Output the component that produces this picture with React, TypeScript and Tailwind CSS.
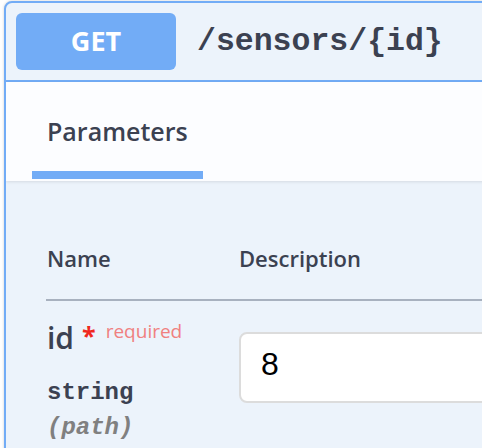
const sans = { fontFamily: '"Open Sans", "Noto Sans", sans-serif' };
const mono = { fontFamily: '"Liberation Mono", "Courier New", monospace' };

const App = () => {
  return (
    <div className="w-[482px] h-[448px] overflow-hidden bg-white" style={sans}>
      <div className="mt-px ml-1 w-[700px] h-[500px] border-2 border-[#72acf6] rounded-lg bg-[#ecf3fb] shadow-[0_0_3px_rgba(0,0,0,0.19)] overflow-hidden">
        {/* summary */}
        <div className="h-[79px] flex items-center pl-[10px] border-b-2 border-[#72acf6]">
          <div className="w-[160px] h-[57px] rounded-md bg-[#72acf6] text-white font-bold text-[27px] flex items-center justify-center">
            GET
          </div>
          <span
            className="ml-[21px] text-[31.5px] font-bold text-[#3b4151]"
            style={mono}
          >
            /sensors/{'{id}'}
          </span>
        </div>

        {/* tab header */}
        <div className="relative h-[99px] bg-[#fcfdff] shadow-[0_1px_3px_rgba(0,0,0,0.1)] flex items-end pl-[26px] pb-[2px]">
          <div className="flex flex-col">
            <span className="px-[15px] mb-[27px] text-[25px] leading-[26px] font-semibold text-[#3b4151]">
              Parameters
            </span>
            <div className="h-[8px] bg-[#72acf6]" />
          </div>
        </div>

        {/* parameters table */}
        <div className="pl-[40px]">
          <div className="flex pt-[66px] pb-[30px] border-b-2 border-[#a8b1bf] text-[22px] leading-[22px] font-semibold text-[#3b4151]">
            <span className="w-[193px] pl-px">Name</span>
            <span>Description</span>
          </div>
          <div className="flex">
            <div className="w-[193px] pl-px pt-[20px] text-[#3b4151]">
              <div className="flex items-baseline">
                <span className="text-[30px] leading-[30px] font-semibold">id</span>
                <span className="ml-[8px] text-[25px] font-bold text-[#f0281e] relative -top-[4px]">
                  *
                </span>
                <span className="ml-[10px] text-[19px] text-[#f08080] relative -top-[11px]">
                  required
                </span>
              </div>
              <div
                className="mt-[22px] text-[24px] leading-[24px] font-bold"
                style={mono}
              >
                string
              </div>
              <div
                className="mt-[11px] text-[24px] leading-[24px] font-bold italic text-[#808080]"
                style={mono}
              >
                (path)
              </div>
            </div>
            <div className="pt-[31px]">
              <div
                className="w-[340px] h-[71px] rounded-lg border-2 border-[#dcdcdc] bg-white pl-[20px] pt-[14px] text-[32px] leading-[32px] text-black"
                style={{ fontFamily: '"Liberation Sans", Arial, sans-serif' }}
              >
                8
              </div>
            </div>
          </div>
        </div>
      </div>
    </div>
  );
};

export default App;
